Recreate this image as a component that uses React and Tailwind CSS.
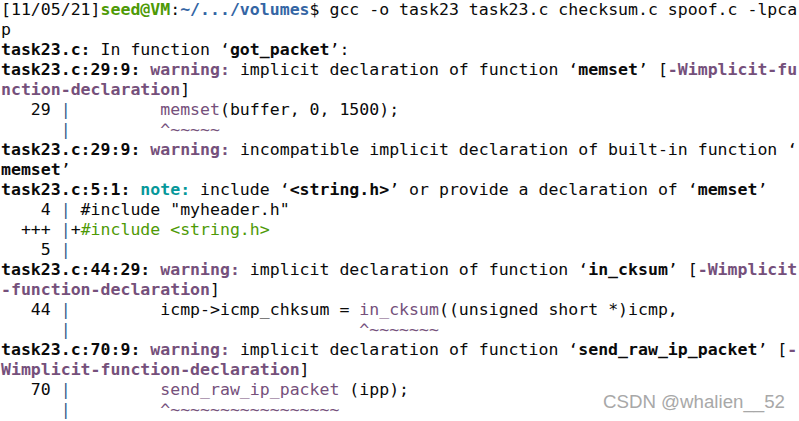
import React from "react";

const B = ({ children }) => <span className="font-bold">{children}</span>;
const W = ({ children }) => <span className="font-bold text-[#75507b]">{children}</span>;
const P = ({ children }) => <span className="text-[#75507b]">{children}</span>;
const Bar = () => <span className="text-[#3b5b8c]">|</span>;
const G = ({ children }) => <span className="text-[#4e9a06]">{children}</span>;

const lines = [
  <>[11/05/21]<span className="font-bold text-[#4e9a06]">seed@VM</span>:<span className="font-bold text-[#3465a4]">~/.../volumes</span>$ gcc -o task23 task23.c checksum.c spoof.c -lpca</>,
  <>p</>,
  <><B>task23.c:</B> In function ‘<B>got_packet</B>’:</>,
  <><B>task23.c:29:9:</B> <W>warning: </W>implicit declaration of function ‘<B>memset</B>’ [<W>-Wimplicit-fu</W></>,
  <><W>nction-declaration</W>]</>,
  <>   29 <Bar />         <P>memset</P>(buffer, 0, 1500);</>,
  <>      <Bar />         <P>^~~~~~</P></>,
  <><B>task23.c:29:9:</B> <W>warning: </W>incompatible implicit declaration of built-in function ‘</>,
  <><B>memset</B>’</>,
  <><B>task23.c:5:1:</B> <span className="font-bold text-[#06989a]">note: </span>include ‘<B>&lt;string.h&gt;</B>’ or provide a declaration of ‘<B>memset</B>’</>,
  <>    4 <Bar /> #include "myheader.h"</>,
  <>  +++ <Bar />+<G>#include &lt;string.h&gt;</G></>,
  <>    5 <Bar /></>,
  <><B>task23.c:44:29:</B> <W>warning: </W>implicit declaration of function ‘<B>in_cksum</B>’ [<W>-Wimplicit</W></>,
  <><W>-function-declaration</W>]</>,
  <>   44 <Bar />         icmp-&gt;icmp_chksum = <P>in_cksum</P>((unsigned short *)icmp,</>,
  <>      <Bar />                             <P>^~~~~~~~</P></>,
  <><B>task23.c:70:9:</B> <W>warning: </W>implicit declaration of function ‘<B>send_raw_ip_packet</B>’ [<W>-</W></>,
  <><W>Wimplicit-function-declaration</W>]</>,
  <>   70 <Bar />         <P>send_raw_ip_packet</P> (ipp);</>,
  <>      <Bar />         <P>^~~~~~~~~~~~~~~~~~</P></>,
];

export default function App() {
  return (
    <div className="relative w-[799px] h-[421px] overflow-hidden bg-white text-[#0a0a0a]">
      <div className="pl-[1px] pt-0 font-['DejaVu_Sans_Mono',monospace] text-[16.55px] leading-[20px]">
        {lines.map((l, i) => (
          <div key={i} className="whitespace-pre h-[20px]">{l}</div>
        ))}
      </div>
      <div className="absolute right-[14px] top-[390px] font-['Liberation_Sans',sans-serif] text-[18.7px] leading-[24px] text-[#a8a8a8]">
        CSDN @whalien__52
      </div>
    </div>
  );
}
